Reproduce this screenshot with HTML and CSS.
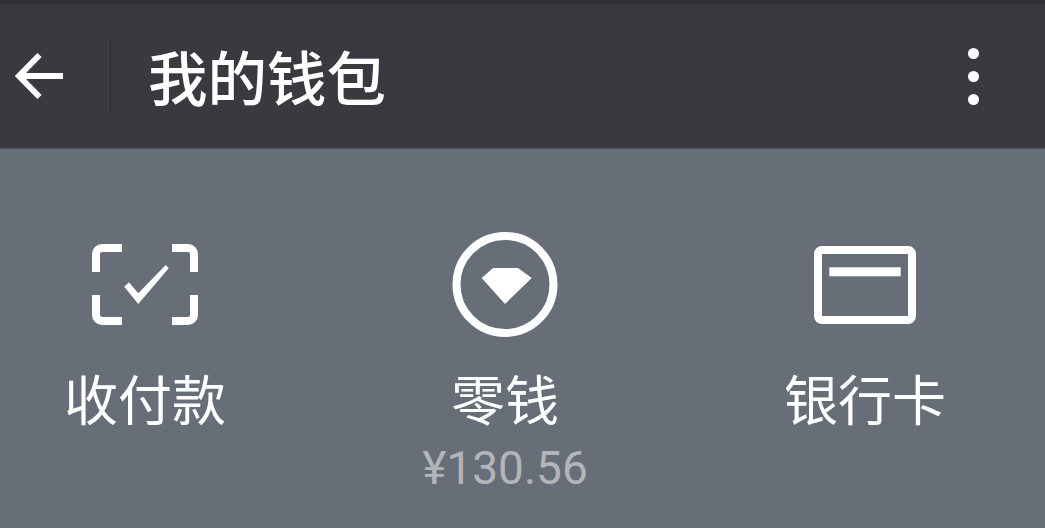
FILE: index.html
```html
<!DOCTYPE html>
<html lang="zh-CN">
<head>
    <meta charset="UTF-8">
    <meta name="viewport" content="width=device-width, initial-scale=1.0">
    <title>我的钱包</title>
    <link rel="stylesheet" href="styles.css">
</head>
<body>
    <header class="topbar">
        <svg class="back-icon" viewBox="0 0 50 50" width="50" height="50">
            <path d="M49 25H6M25.500 4L5 25l20.500 21" fill="none" stroke="#fff" stroke-width="6"/>
        </svg>
        <div class="divider"></div>
        <h1 class="title">我的钱包</h1>
        <div class="more">
            <span class="dot"></span>
            <span class="dot"></span>
            <span class="dot"></span>
        </div>
    </header>
    <main class="wallet">
        <div class="item">
            <svg class="item-icon" viewBox="0 0 106 82" width="106" height="82">
                <path d="M30 4H10a6 6 0 0 0-6 6V28M80 4h16a6 6 0 0 1 6 6V28M4 51v20a6 6 0 0 0 6 6h20M102 51v20a6 6 0 0 1-6 6H80" fill="none" stroke="#fff" stroke-width="8"/>
                <polygon points="32.300,42.700 36.900,38.300 46.300,49.300 73.700,21 76.700,24.300 46.300,60" fill="#fff"/>
            </svg>
            <div class="label">收付款</div>
        </div>
        <div class="item">
            <svg class="item-icon" viewBox="0 0 106 106" width="106" height="106">
                <circle cx="53" cy="52.500" r="48.500" fill="none" stroke="#fff" stroke-width="8"/>
                <polygon points="41,36 66,36 79.700,46 53,72 29.700,46" fill="#fff"/>
            </svg>
            <div class="label">零钱</div>
            <div class="amount">¥130.56</div>
        </div>
        <div class="item">
            <svg class="item-icon" viewBox="0 0 102 78" width="102" height="78">
                <rect x="4" y="4" width="94" height="70" rx="4" fill="none" stroke="#fff" stroke-width="8"/>
                <rect x="15.300" y="21.300" width="71.400" height="9" fill="#fff"/>
            </svg>
            <div class="label">银行卡</div>
        </div>
    </main>
</body>
</html>
```

FILE: styles.css
```css
* {
    margin: 0;
    padding: 0;
    box-sizing: border-box;
}

html, body {
    height: 100%;
    overflow: hidden;
}

body {
    font-family: "Noto Sans CJK SC", "Noto Sans", sans-serif;
    background-color: #686e78;
    color: white;
    display: flex;
    flex-direction: column;
}

.topbar {
    height: 149px;
    background-color: #393a3f;
    border-top: 4px solid #2f3034;
    border-bottom: 1px solid #4c4e54;
    display: flex;
    align-items: center;
    padding-left: 14px;
    padding-right: 66px;
}

.back-icon {
    flex-shrink: 0;
}

.divider {
    width: 1px;
    height: 72px;
    background-color: #2d2e32;
    margin-left: 46px;
    margin-right: 37px;
}

.title {
    font-size: 59.500px;
    font-weight: 500;
    line-height: 1;
    flex: 1;
}

.more {
    display: flex;
    flex-direction: column;
    gap: 12px;
}

.dot {
    display: block;
    width: 11px;
    height: 11px;
    border-radius: 50%;
    background-color: white;
}

.wallet {
    display: grid;
    grid-template-columns: repeat(3, 160px);
    column-gap: 200px;
    padding-left: 65px;
    padding-top: 83px;
}

.item {
    display: flex;
    flex-direction: column;
    align-items: center;
}

.item-icon {
    display: block;
    height: 106px;
}

.label {
    font-size: 54px;
    line-height: 76px;
    margin-top: 22px;
    white-space: nowrap;
}

.amount {
    font-family: Roboto, sans-serif;
    font-size: 46px;
    line-height: 54px;
    margin-top: 5px;
    color: #b2b5ba;
    white-space: nowrap;
}
```
